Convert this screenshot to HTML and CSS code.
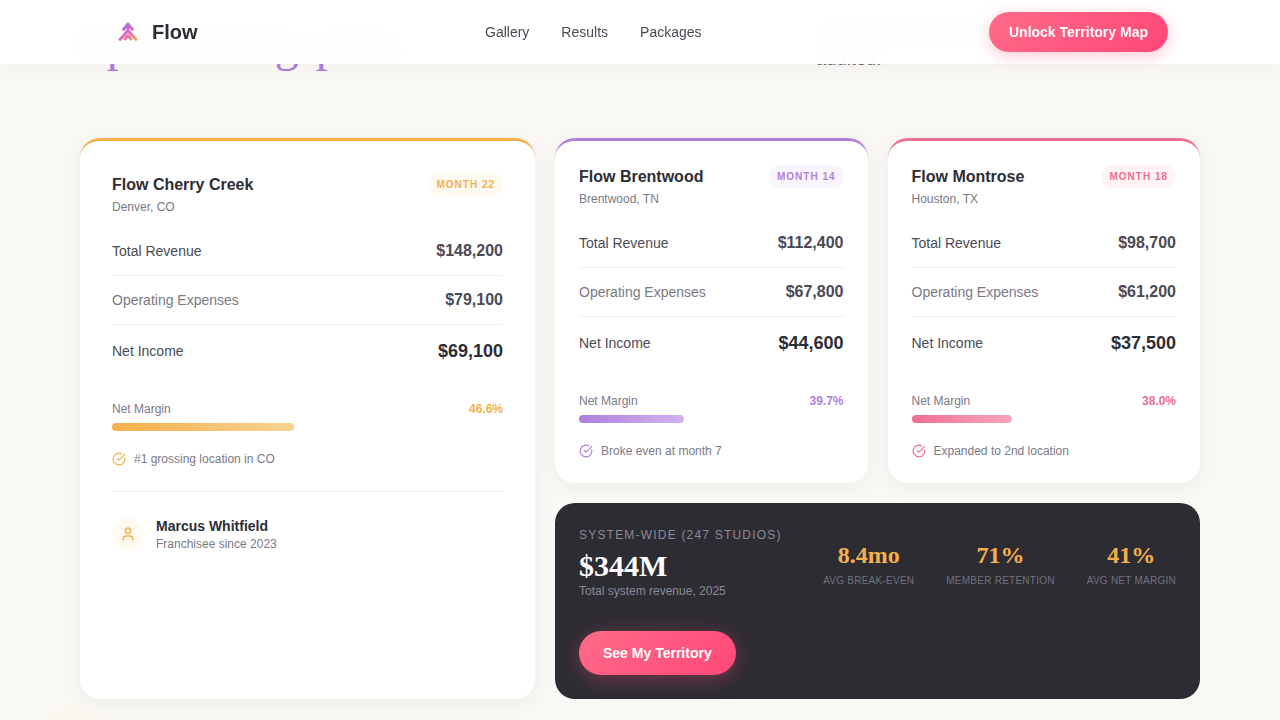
FILE: index.html
```html
<!DOCTYPE html>
<html lang="en">
  <head>
    <meta charset="UTF-8" />
    <meta name="viewport" content="width=device-width, initial-scale=1.0" />
    <title>Flow Results</title>
    <link rel="stylesheet" href="styles.css">
  </head>
  <body>
    <!-- Nav -->
    <nav class="nav">
      <div class="nav-inner">
        <a class="logo" href="#">
          <svg class="logo-mark" viewBox="0 0 20 20" fill="none" stroke="url(#logoGrad)" stroke-width="2.8" stroke-linecap="round" stroke-linejoin="round">
            <defs>
              <linearGradient id="logoGrad" gradientUnits="userSpaceOnUse" x1="6" y1="2" x2="18" y2="18">
                <stop offset="0" stop-color="#a472ea" />
                <stop offset="0.55" stop-color="#e468b0" />
                <stop offset="1" stop-color="#f7aa62" />
              </linearGradient>
            </defs>
            <path d="M5.5 7.5 L10 2 L14.5 7.5" />
            <path d="M10 3 V9" />
            <path d="M2 17.5 L10 8.5 L18 17.5" />
            <path d="M7 17 L10 13.5 L13 17" />
          </svg>
          <span>Flow</span>
        </a>
        <div class="nav-links">
          <a href="#">Gallery</a>
          <a href="#">Results</a>
          <a href="#">Packages</a>
        </div>
        <a class="btn btn-nav" href="#">Unlock Territory Map</a>
      </div>
    </nav>

    <main class="results">
      <!-- Section heading, scrolled under the nav -->
      <div class="section-head">
        <h2>Sponsoring pros</h2>
        <p>Real financials from open studios, fully<br />audited.</p>
      </div>

      <div class="results-grid">
        <!-- Featured location -->
        <div class="card card-featured orange">
          <div class="card-head">
            <div>
              <div class="studio-name">Flow Cherry Creek</div>
              <div class="studio-place">Denver, CO</div>
            </div>
            <span class="badge">MONTH 22</span>
          </div>
          <div class="row"><span>Total Revenue</span><strong>$148,200</strong></div>
          <div class="row muted"><span>Operating Expenses</span><strong>$79,100</strong></div>
          <div class="row net"><span>Net Income</span><strong>$69,100</strong></div>
          <div class="margin-line"><span>Net Margin</span><strong>46.6%</strong></div>
          <div class="bar"><div class="bar-fill" style="width: 46.6%"></div></div>
          <div class="note">
            <svg viewBox="0 0 24 24" fill="none" stroke="currentColor" stroke-width="2" stroke-linecap="round" stroke-linejoin="round"><path d="M21.801 10A10 10 0 1 1 17 3.335" /><path d="m9 11 3 3L22 4" /></svg>
            <span>#1 grossing location in CO</span>
          </div>
          <div class="owner">
            <div class="avatar">
              <svg viewBox="0 0 24 24" fill="none" stroke="currentColor" stroke-width="2" stroke-linecap="round" stroke-linejoin="round"><path d="M19 21v-2a4 4 0 0 0-4-4H9a4 4 0 0 0-4 4v2" /><circle cx="12" cy="7" r="4" /></svg>
            </div>
            <div>
              <div class="owner-name">Marcus Whitfield</div>
              <div class="owner-since">Franchisee since 2023</div>
            </div>
          </div>
        </div>

        <div class="card purple">
          <div class="card-head">
            <div>
              <div class="studio-name">Flow Brentwood</div>
              <div class="studio-place">Brentwood, TN</div>
            </div>
            <span class="badge">MONTH 14</span>
          </div>
          <div class="row"><span>Total Revenue</span><strong>$112,400</strong></div>
          <div class="row muted"><span>Operating Expenses</span><strong>$67,800</strong></div>
          <div class="row net"><span>Net Income</span><strong>$44,600</strong></div>
          <div class="margin-line"><span>Net Margin</span><strong>39.7%</strong></div>
          <div class="bar"><div class="bar-fill" style="width: 39.7%"></div></div>
          <div class="note">
            <svg viewBox="0 0 24 24" fill="none" stroke="currentColor" stroke-width="2" stroke-linecap="round" stroke-linejoin="round"><path d="M21.801 10A10 10 0 1 1 17 3.335" /><path d="m9 11 3 3L22 4" /></svg>
            <span>Broke even at month 7</span>
          </div>
        </div>

        <div class="card pink">
          <div class="card-head">
            <div>
              <div class="studio-name">Flow Montrose</div>
              <div class="studio-place">Houston, TX</div>
            </div>
            <span class="badge">MONTH 18</span>
          </div>
          <div class="row"><span>Total Revenue</span><strong>$98,700</strong></div>
          <div class="row muted"><span>Operating Expenses</span><strong>$61,200</strong></div>
          <div class="row net"><span>Net Income</span><strong>$37,500</strong></div>
          <div class="margin-line"><span>Net Margin</span><strong>38.0%</strong></div>
          <div class="bar"><div class="bar-fill" style="width: 38%"></div></div>
          <div class="note">
            <svg viewBox="0 0 24 24" fill="none" stroke="currentColor" stroke-width="2" stroke-linecap="round" stroke-linejoin="round"><path d="M21.801 10A10 10 0 1 1 17 3.335" /><path d="m9 11 3 3L22 4" /></svg>
            <span>Expanded to 2nd location</span>
          </div>
        </div>

        <!-- System-wide summary -->
        <div class="summary">
          <div class="summary-top">
            <div>
              <div class="summary-label">SYSTEM-WIDE (247 STUDIOS)</div>
              <div class="summary-total">$344M</div>
              <div class="summary-sub">Total system revenue, 2025</div>
            </div>
            <div class="stats">
              <div class="stat">
                <div class="stat-value">8.4mo</div>
                <div class="stat-label">AVG BREAK-EVEN</div>
              </div>
              <div class="stat">
                <div class="stat-value">71%</div>
                <div class="stat-label">MEMBER RETENTION</div>
              </div>
              <div class="stat">
                <div class="stat-value">41%</div>
                <div class="stat-label">AVG NET MARGIN</div>
              </div>
            </div>
          </div>
          <a class="btn btn-summary" href="#">See My Territory</a>
        </div>
      </div>
    </main>
  </body>
</html>
```

FILE: styles.css
```css
* {
  box-sizing: border-box;
}

body {
  margin: 0;
  height: 720px;
  overflow: hidden;
  font-family: "Liberation Sans", Arial, sans-serif;
  line-height: 1.5;
  color: #2d2d35;
  background-color: #faf8f4;
  background-image: radial-gradient(circle at 75px 740px, #fdf6e2 0, rgba(253, 246, 226, 0) 40px);
}

a {
  text-decoration: none;
}

.orange {
  --accent: #f5b04c;
  --accent-light: #fad291;
  --accent-bg: #fffaf1;
}

.purple {
  --accent: #b07fe0;
  --accent-light: #d2b3ee;
  --accent-bg: #f9f4fd;
}

.pink {
  --accent: #f06f94;
  --accent-light: #f9a5bd;
  --accent-bg: #fff3f6;
}

/* Nav */
.nav {
  position: fixed;
  top: 0;
  left: 0;
  right: 0;
  z-index: 10;
  height: 64px;
  background: rgba(255, 255, 255, 0.95);
  backdrop-filter: blur(12px);
  box-shadow: 0 2px 20px rgba(0, 0, 0, 0.04);
}

.nav-inner {
  max-width: 1120px;
  height: 100%;
  margin: 0 auto;
  padding: 0 32px;
  display: flex;
  justify-content: space-between;
  align-items: center;
}

.logo {
  display: flex;
  align-items: center;
  gap: 14px;
  padding-left: 6px;
  font-size: 20px;
  font-weight: bold;
  color: #2d2d35;
}

.logo-mark {
  width: 20px;
  height: 20px;
}

.nav-links {
  display: flex;
  gap: 32px;
  font-size: 14px;
}

.nav-links a {
  color: #4a4a55;
}

.btn {
  display: inline-flex;
  align-items: center;
  color: #fff;
  font-size: 14px;
  font-weight: bold;
  background: linear-gradient(135deg, #ff6b8a, #ff4777);
}

.btn-nav {
  height: 40px;
  padding: 0 20px;
  border-radius: 20px;
  box-shadow: 0 4px 16px rgba(255, 77, 122, 0.3);
}

/* Section heading */
.results {
  padding: 15px 80px 0;
}

.section-head {
  display: flex;
  justify-content: space-between;
  align-items: flex-end;
  margin-bottom: 63px;
}

.section-head h2 {
  margin: 0;
  font-family: "Liberation Serif", "Times New Roman", serif;
  font-size: 48px;
  font-weight: normal;
  line-height: 60px;
  word-spacing: 5px;
  color: #b07fe0;
}

.section-head p {
  width: 384px;
  margin: 0 0 2px;
  font-size: 18.4px;
  color: #6a6a75;
}

/* Cards */
.results-grid {
  display: grid;
  grid-template-columns: 455px 1fr 1fr;
  gap: 20px;
}

.card {
  padding: 24px 24px 23px;
  background: #fff;
  border-top: 3px solid var(--accent);
  border-radius: 20px;
  box-shadow: 0 4px 20px rgba(0, 0, 0, 0.05);
}

.card-featured {
  grid-row: span 2;
  padding: 32px;
}

.card-head {
  display: flex;
  justify-content: space-between;
  align-items: flex-start;
  margin-bottom: 11px;
}

.studio-name {
  font-size: 16px;
  font-weight: bold;
  color: #2d2d35;
}

.studio-place {
  margin-top: 1px;
  font-size: 12px;
  color: #7a7a85;
}

.badge {
  padding: 4px 8px;
  font-size: 10px;
  font-weight: bold;
  letter-spacing: 1px;
  color: var(--accent);
  background: var(--accent-bg);
  border-radius: 12px;
}

.row {
  display: flex;
  justify-content: space-between;
  align-items: baseline;
  padding: 12px 0;
  font-size: 14px;
  color: #4a4a55;
  border-bottom: 1px solid #f3f1ee;
}

.row strong {
  font-size: 16px;
}

.row.muted {
  color: #7a7a85;
}

.row.muted strong {
  color: #4a4a55;
}

.row.net {
  align-items: center;
  padding-top: 13px;
  border-bottom: 0;
}

.row.net strong {
  font-size: 18px;
  color: #2d2d35;
}

.margin-line {
  display: flex;
  justify-content: space-between;
  margin-top: 23px;
  font-size: 12px;
  color: #7a7a85;
}

.margin-line strong {
  color: var(--accent);
}

.bar {
  height: 8px;
  margin-top: 5px;
  border-radius: 4px;
}

.bar-fill {
  height: 100%;
  border-radius: 4px;
  background: linear-gradient(90deg, var(--accent), var(--accent-light));
}

.note {
  display: flex;
  align-items: center;
  gap: 8px;
  margin-top: 19px;
  font-size: 12px;
  color: #7a7a85;
}

.note svg {
  width: 14px;
  height: 14px;
  color: var(--accent);
}

.owner {
  display: flex;
  align-items: flex-start;
  gap: 12px;
  margin-top: 23px;
  padding-top: 25px;
  border-top: 1px solid #eeece8;
}

.avatar {
  display: flex;
  justify-content: center;
  align-items: center;
  width: 32px;
  height: 32px;
  margin-top: 1px;
  color: var(--accent);
  background: var(--accent-bg);
  border-radius: 50%;
}

.avatar svg {
  width: 16px;
  height: 16px;
}

.owner-name {
  font-size: 14px;
  font-weight: bold;
  line-height: 18px;
}

.owner-since {
  font-size: 12px;
  line-height: 18px;
  color: #7a7a85;
}

/* Summary */
.summary {
  grid-column: span 2;
  padding: 24px;
  color: #fff;
  background: #2d2c33;
  border-radius: 20px;
}

.summary-top {
  display: flex;
  justify-content: space-between;
  align-items: center;
  margin-bottom: 31px;
}

.summary-label {
  font-size: 12px;
  line-height: 16px;
  letter-spacing: 1.2px;
  color: #8a8a95;
}

.summary-total {
  margin-top: 7px;
  font-family: "Liberation Serif", "Times New Roman", serif;
  font-size: 30px;
  font-weight: bold;
  line-height: 32px;
}

.summary-sub {
  font-size: 12px;
  color: #8a8a95;
}

.stats {
  display: flex;
  gap: 32px;
  margin-bottom: 2px;
  text-align: center;
}

.stat-value {
  font-family: "Liberation Serif", "Times New Roman", serif;
  font-size: 24px;
  font-weight: bold;
  line-height: 35px;
  color: #f5b04c;
}

.stat-label {
  font-size: 10px;
  letter-spacing: 0.25px;
  color: #72727d;
}

.btn-summary {
  height: 44px;
  padding: 1px 24px 0;
  border-radius: 22px;
  box-shadow: 0 4px 20px rgba(255, 77, 122, 0.35);
}
```
